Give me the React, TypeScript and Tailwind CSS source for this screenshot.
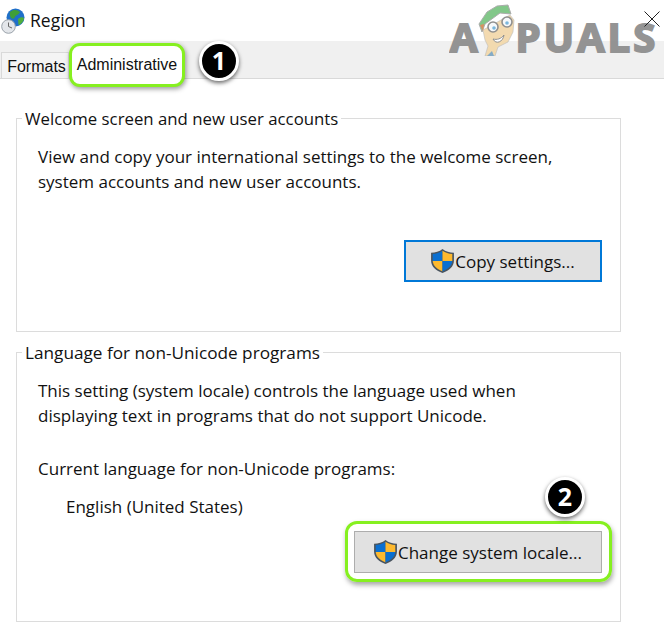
import React from 'react';

const Shield: React.FC = () => (
  <svg width="25" height="26" viewBox="0 0 24 25" className="shrink-0 -ml-[1px]">
    <path d="M12 1 C9 3.5 5 4.5 1 4.5 L1 12 C1 18 6 22 12 24 C18 22 23 18 23 12 L23 4.5 C19 4.5 15 3.5 12 1 Z" fill="#4a5560" />
    <path d="M12 2.6 C9.4 4.6 6 5.6 2.6 5.8 L2.6 12.5 L12 12.5 Z" fill="#0a6fd0" />
    <path d="M12 2.6 C14.6 4.6 18 5.6 21.4 5.8 L21.4 12.5 L12 12.5 Z" fill="#fdb92e" />
    <path d="M2.6 12.5 L12 12.5 L12 22.4 C7 20.6 3 17.4 2.6 12.5 Z" fill="#fdb92e" />
    <path d="M21.4 12.5 L12 12.5 L12 22.4 C17 20.6 21 17.4 21.4 12.5 Z" fill="#0a6fd0" />
  </svg>
);

const Badge: React.FC<{ n: string; className: string }> = ({ n, className }) => (
  <div
    className={`absolute w-[40px] h-[40px] rounded-full bg-black border-[3px] border-white shadow-[0_2px_4px_rgba(0,0,0,0.6)] flex items-center justify-center text-white text-[25px] font-bold font-['Open_Sans',sans-serif] ${className}`}
  >
    {n}
  </div>
);

const RegionIcon: React.FC = () => (
  <svg width="24" height="26" viewBox="0 0 24 26" className="shrink-0">
    <circle cx="14.5" cy="9.5" r="9" fill="#1f6fc9" />
    <path d="M9 4 C12 1 17 1.5 19 4 C18 7 14 7 13.5 10 C11 12 8 9 9 4 Z" fill="#3f9f38" />
    <path d="M17 11 C19 9 22 9 23 10 C22.5 14 20 16.5 17.5 17 Z" fill="#4fae3c" />
    <circle cx="7.5" cy="18.5" r="6.8" fill="#e3e6ea" stroke="#9aa2aa" />
    <path d="M7.5 14.5 L7.5 18.5 L11 20" fill="none" stroke="#666" strokeWidth="1" />
  </svg>
);

const Mascot: React.FC = () => (
  <svg width="38" height="52" viewBox="8 4 38 52" className="shrink-0">
    <path d="M13 30 L40 15 L44 20 L43 32 L38 42 L28 47 L25 56 L15 56 L18 46 L15 40 Z" fill="#f3d9ac" stroke="#b9b9b9" strokeWidth="0.6" />
    <path d="M9 24 L17 12 L27 6 L38 5 L41 14 L30 13 L15 24 L12 32 Z" fill="#7cc583" stroke="#a8a8a8" />
    <path d="M10 25 L14 24 L13 31 Z" fill="#d98a5a" />
    <circle cx="23" cy="27" r="5" fill="#f6f8fa" stroke="#8a8a8a" strokeWidth="1.6" />
    <circle cx="37" cy="22" r="5" fill="#f6f8fa" stroke="#8a8a8a" strokeWidth="1.6" />
    <circle cx="24" cy="28" r="1.8" fill="#74b4dc" />
    <circle cx="37" cy="23" r="1.8" fill="#74b4dc" />
    <path d="M23 39 C27 40 31 39 34 35 C33 42 26 45 23 39 Z" fill="#fff" stroke="#8a8a8a" />
    <path d="M17 56 L22 51 L24 56 Z" fill="#7fa8c4" />
  </svg>
);

const Group: React.FC<{ title: string; className: string; legendSize: string; children: React.ReactNode }> = ({
  title,
  className,
  legendSize,
  children,
}) => (
  <fieldset className={`border border-[#dcdcdc] mx-[16px] w-[605px] pl-[21px] pr-[18px] ${className}`}>
    <legend className={`-ml-[16px] px-[3px] leading-[24px] text-[#111] relative top-[1px] ${legendSize}`}>{title}</legend>
    {children}
  </fieldset>
);

export default function App() {
  return (
    <div className="relative w-[664px] h-[635px] bg-white overflow-hidden font-['Open_Sans',sans-serif] text-[#111]">
      {/* title bar */}
      <div className="h-[41px] flex items-center pl-[1px] gap-[5px]">
        <RegionIcon />
        <span className="text-[17.5px]">Region</span>
      </div>

      {/* tabs */}
      <div className="h-[38px] bg-[#f0f0f0] border-b border-[#d9d9d9] flex items-end font-['Liberation_Sans',sans-serif] text-[16px]">
        <div className="h-[26px] ml-[1px] w-[68px] bg-[#f4f4f4] border border-b-0 border-[#d9d9d9] flex items-center justify-center pt-[2px] pl-[3px]">
          Formats
        </div>
      </div>
      <div className="absolute left-[69px] top-[43px] w-[116px] h-[44px] bg-white rounded-[11px] border-[3px] border-[#86f020] shadow-[1px_2px_5px_rgba(0,0,0,0.4)] flex items-center justify-center font-['Liberation_Sans',sans-serif] text-[16px]">
        Administrative
      </div>
      <Badge n="1" className="left-[199px] top-[41px]" />

      <Group title="Welcome screen and new user accounts" legendSize="text-[16.8px]" className="mt-[27px] h-[226px]">
        <p className="mt-[14px] text-[17px] leading-[25px]">
          View and copy your international settings to the welcome screen,
          <br />
          system accounts and new user accounts.
        </p>
        <div className="flex justify-end mt-[46px]">
          <button className="w-[198px] h-[42px] bg-[#e1e1e1] border-2 border-[#0078d7] flex items-center justify-center text-[17px]">
            <Shield />
            <span className="pt-[2px]">Copy settings...</span>
          </button>
        </div>
      </Group>

      <Group title="Language for non-Unicode programs" legendSize="text-[17.2px]" className="mt-[8px] h-[282px]">
        <p className="mt-[14px] text-[17px] leading-[25px]">
          This setting (system locale) controls the language used when
          <br />
          displaying text in programs that do not support Unicode.
        </p>
        <p className="mt-[28px] text-[17px] leading-[25px]">Current language for non-Unicode programs:</p>
        <p className="mt-[13px] ml-[28px] text-[17px] leading-[25px]">English (United States)</p>
        <div className="flex justify-end mt-[12px]">
          <button className="w-[248px] h-[42px] bg-[#e1e1e1] border border-[#adadad] flex items-center justify-center text-[17px]">
            <Shield />
            <span className="pt-[2px]">Change system locale...</span>
          </button>
        </div>
      </Group>

      {/* highlight round the second button */}
      <div className="absolute left-[345px] top-[521px] w-[267px] h-[61px] rounded-[12px] border-[3px] border-[#86f020] shadow-[1px_3px_5px_rgba(0,0,0,0.35)]" />
      <Badge n="2" className="left-[545px] top-[477px]" />

      {/* watermark */}
      <div className="absolute left-[450px] top-[4px] h-[52px] flex items-end text-[#8f8f8f] opacity-95 font-['Open_Sans',sans-serif] font-bold text-[40px] leading-[38px] [-webkit-text-stroke:2px_#8f8f8f]">
        <span>A</span>
        <Mascot />
        <span className="tracking-[3px]">PUALS</span>
      </div>

      {/* close */}
      <svg width="16" height="16" viewBox="0 0 16 16" className="absolute left-[644px] top-[11px]">
        <path d="M0.5 0.5 L15.5 15.5 M15.5 0.5 L0.5 15.5" stroke="#222" strokeWidth="1" />
      </svg>
    </div>
  );
}
